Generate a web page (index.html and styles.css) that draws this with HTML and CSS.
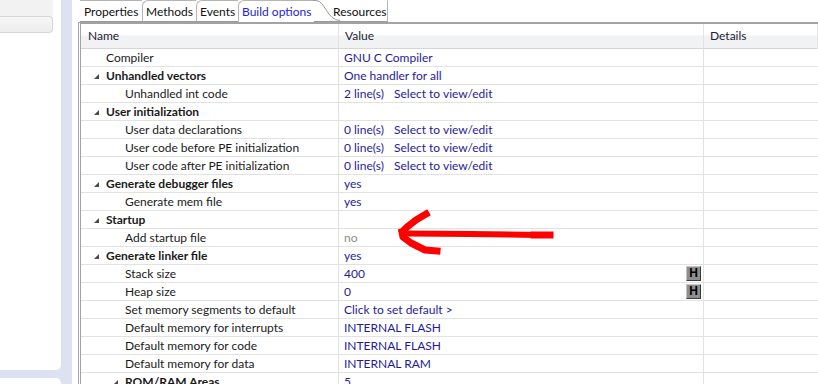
FILE: index.html
```html
<!DOCTYPE html>
<html lang="en">
<head>
    <meta charset="UTF-8" />
    <title>Build options</title>
    <link rel="stylesheet" href="styles.css">
</head>
<body>

    <div class="side">
        <div class="panel panel-top">
            <div class="panel-head"></div>
            <div class="panel-btn"></div>
        </div>
        <div class="panel panel-bottom"></div>
    </div>

    <div class="main">
        <div class="tabs">
            <div class="tab t-props">Properties</div>
            <div class="tab t-methods">Methods</div>
            <div class="tab t-events">Events</div>
            <div class="tab t-build active">Build options
                <svg class="curve" width="28" height="23" viewBox="0 0 28 23">
                    <path d="M0 1.5 L3 1.5 C12 1.5 14 21.5 27 21.5" fill="white" stroke="#9a9a9a" stroke-width="1"/>
                </svg>
            </div>
            <div class="tab t-res">Resources</div>
        </div>

        <div class="frame">
            <div class="row head">
                <div class="cell name">Name</div>
                <div class="cell value">Value</div>
                <div class="cell">Details</div>
            </div>

            <div class="row"><div class="cell name lv0">Compiler</div><div class="cell value">GNU C Compiler</div><div class="cell"></div></div>
            <div class="row"><div class="cell name grp"><span class="tw"></span>Unhandled vectors</div><div class="cell value">One handler for all</div><div class="cell"></div></div>
            <div class="row"><div class="cell name lv1">Unhandled int code</div><div class="cell value"><span class="lines">2 line(s)</span>Select to view/edit</div><div class="cell"></div></div>
            <div class="row"><div class="cell name grp"><span class="tw"></span>User initialization</div><div class="cell value"></div><div class="cell"></div></div>
            <div class="row"><div class="cell name lv1">User data declarations</div><div class="cell value"><span class="lines">0 line(s)</span>Select to view/edit</div><div class="cell"></div></div>
            <div class="row"><div class="cell name lv1">User code before PE initialization</div><div class="cell value"><span class="lines">0 line(s)</span>Select to view/edit</div><div class="cell"></div></div>
            <div class="row"><div class="cell name lv1">User code after PE initialization</div><div class="cell value"><span class="lines">0 line(s)</span>Select to view/edit</div><div class="cell"></div></div>
            <div class="row"><div class="cell name grp"><span class="tw"></span>Generate debugger files</div><div class="cell value">yes</div><div class="cell"></div></div>
            <div class="row"><div class="cell name lv1">Generate mem file</div><div class="cell value">yes</div><div class="cell"></div></div>
            <div class="row"><div class="cell name grp"><span class="tw"></span>Startup</div><div class="cell value"></div><div class="cell"></div></div>
            <div class="row"><div class="cell name lv1">Add startup file</div><div class="cell value off">no</div><div class="cell"></div></div>
            <div class="row"><div class="cell name grp"><span class="tw"></span>Generate linker file</div><div class="cell value">yes</div><div class="cell"></div></div>
            <div class="row"><div class="cell name lv1">Stack size</div><div class="cell value split">400<span class="hbtn">H</span></div><div class="cell"></div></div>
            <div class="row"><div class="cell name lv1">Heap size</div><div class="cell value split">0<span class="hbtn">H</span></div><div class="cell"></div></div>
            <div class="row"><div class="cell name lv1">Set memory segments to default</div><div class="cell value">Click to set default &gt;</div><div class="cell"></div></div>
            <div class="row"><div class="cell name lv1">Default memory for interrupts</div><div class="cell value">INTERNAL FLASH</div><div class="cell"></div></div>
            <div class="row"><div class="cell name lv1">Default memory for code</div><div class="cell value">INTERNAL FLASH</div><div class="cell"></div></div>
            <div class="row"><div class="cell name lv1">Default memory for data</div><div class="cell value">INTERNAL RAM</div><div class="cell"></div></div>
            <div class="row"><div class="cell name grp sub"><span class="tw"></span>ROM/RAM Areas</div><div class="cell value">5</div><div class="cell"></div></div>
        </div>

        <!-- hand drawn annotation -->
        <svg class="arrow" width="170" height="60" viewBox="392 200 170 60">
            <g fill="none" stroke="#ff0000" stroke-linejoin="round" stroke-linecap="square">
                <path d="M409 233.5 L470 234 L535 235" stroke-width="6"/>
                <path d="M534 235 L550 235" stroke-width="7"/>
                <path d="M426 214 L416 220 L407 227 L403 231" stroke-width="7"/>
                <path d="M402 232 L403 237 L411 243 L425 250 L437 251" stroke-width="7"/>
            </g>
        </svg>
    </div>

</body>
</html>
```

FILE: styles.css
```css
* {
    box-sizing: border-box;
}

body {
    margin: 0;
    display: flex;
    height: 384px;
    overflow: hidden;
    font-family: Lato, "Liberation Sans", sans-serif;
    font-size: 12px;
    color: #1a1a1a;
    background: #fff;
}

/* left view stack */
.side {
    width: 72px;
    padding-right: 11px;
    background: #dde2f3;
    display: flex;
    flex-direction: column;
    gap: 8px;
}

.panel {
    background: #fff;
}

.panel-top {
    height: 370px;
    border-radius: 0 0 5px 0;
}

.panel-bottom {
    flex: 1;
    border-radius: 0 5px 0 0;
}

.panel-head {
    width: 53px;
    height: 16px;
    background: #f2f2f2;
}

.panel-btn {
    width: 53px;
    height: 17px;
    border: 1px solid #d6d6d6;
    border-left: none;
    border-radius: 0 4px 4px 0;
    background: linear-gradient(#f7f7f7, #ececec);
}

/* editor */
.main {
    flex: 1;
    position: relative;
    padding-left: 6px;
    background: #fff;
}

.tabs {
    display: flex;
    height: 22px;
    padding-left: 2px;
}

.tab {
    position: relative;
    height: 22px;
    padding: 3px 0 0 4px;
    border-top: 1px solid #b4b4b4;
    border-left: 1px solid #b4b4b4;
    border-bottom: 1px solid #9a9a9a;
    border-radius: 6px 0 0 0;
    background: #fff;
    color: #111;
    white-space: nowrap;
}

.t-props {
    width: 62px;
    border-left: none;
    border-radius: 0;
    padding-left: 4px;
}

.t-methods {
    width: 54px;
    padding-left: 3px;
}

.t-events {
    width: 42px;
    padding-left: 3px;
}

.t-build {
    width: 76px;
    padding-left: 3px;
    border-bottom-color: #fff;
    color: #2323d6;
    z-index: 1;
}

.t-build .curve {
    position: absolute;
    left: 74px;
    top: -2px;
}

.t-res {
    width: 74px;
    padding-left: 19px;
    border-left: none;
    border-top-color: #fff;
    border-right: 1px solid #b4b4b4;
    border-radius: 0;
}

.frame {
    height: 362px;
    border-top: 2px solid #a3a3a3;
    border-left: 3px double #a3a3a3;
    overflow: hidden;
}

.row {
    display: grid;
    grid-template-columns: 258px 365px 1fr;
    height: 18px;
}

.cell {
    height: 18px;
    line-height: 17px;
    border-bottom: 1px solid #e2e2e2;
    white-space: nowrap;
}

.cell.name,
.cell.value {
    border-right: 1px solid #e2e2e2;
}

.value {
    padding-left: 5px;
    color: #1f1b9c;
}

.value.off {
    color: #8c8c8c;
}

.split {
    display: flex;
    justify-content: space-between;
    align-items: center;
    padding-right: 2px;
}

.lines {
    display: inline-block;
    width: 50px;
}

.hbtn {
    width: 15px;
    height: 15px;
    margin-top: -1px;
    background: #8e8e8e;
    border: 1px solid;
    border-color: #c4c4c4 #3c3c3c #3c3c3c #c4c4c4;
    color: #000;
    font-family: "Liberation Sans", sans-serif;
    font-weight: bold;
    font-size: 12px;
    line-height: 13px;
    text-align: center;
}

.head {
    height: 25px;
}

.head .cell {
    height: 25px;
    line-height: 24px;
    padding-left: 6px;
    color: #1c2236;
    background: linear-gradient(#fff 0, #fff 45%, #f1f2f4 50%, #f1f2f4 100%);
    border-bottom: 1px solid #d5d5d5;
    border-right: 1px solid #e4e4e4;
}

.head .cell.name {
    padding-left: 7px;
}

.lv0 {
    padding-left: 25px;
}

.lv1 {
    padding-left: 44px;
}

.grp {
    padding-left: 13px;
    font-weight: bold;
    display: flex;
    align-items: center;
}

.grp.sub {
    padding-left: 32px;
}

.tw {
    width: 0;
    height: 0;
    margin: 2px 7px 0 0;
    border-bottom: 5px solid #4a4a4a;
    border-left: 5px solid transparent;
}

.arrow {
    position: absolute;
    left: 320px;
    top: 200px;
}
```
